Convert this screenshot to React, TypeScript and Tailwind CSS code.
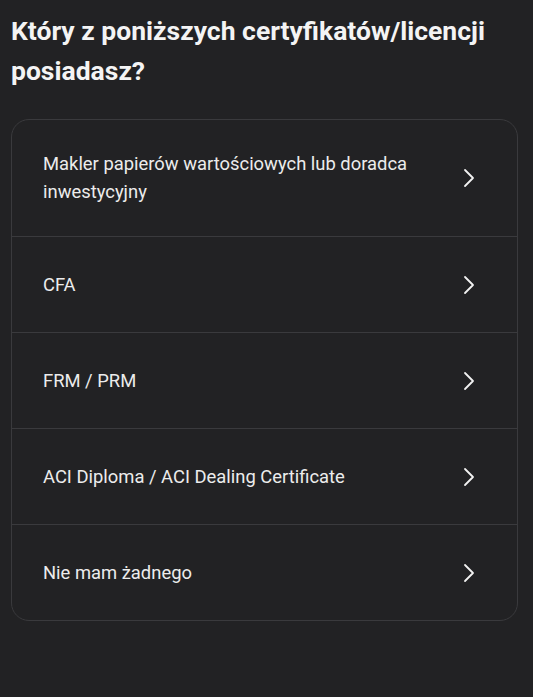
import React from 'react';

const options = [
  'Makler papierów wartościowych lub doradca inwestycyjny',
  'CFA',
  'FRM / PRM',
  'ACI Diploma / ACI Dealing Certificate',
  'Nie mam żadnego',
];

const Chevron = () => (
  <svg width="12" height="20" viewBox="0 0 12 20" fill="none" className="shrink-0">
    <path d="M2 2l8 8-8 8" stroke="#f2f2f2" strokeWidth="1.8" strokeLinecap="round" strokeLinejoin="round" />
  </svg>
);

const App: React.FC = () => {
  return (
    <div className="min-h-[697px] w-full bg-[#222224] px-[11px] pt-[11px] font-['Roboto',sans-serif]">
      <h1 className="text-[26.5px] font-bold leading-[40px] text-[#f4f4f4]">
        Który z poniższych certyfikatów/licencji posiadasz?
      </h1>

      <div className="mt-[28px] w-[507px] overflow-hidden rounded-[18px] border border-[#3a3a3d] bg-[#222224]">
        {options.map((label, i) => (
          <button
            key={label}
            className={`flex w-full items-center justify-between text-left pl-[31px] pr-[42px] py-[30px] min-h-[96px] ${
              i > 0 ? 'border-t border-[#3a3a3d]' : ''
            }`}
          >
            <span className="max-w-[385px] text-[18.4px] leading-[28px] text-[#ececec]">{label}</span>
            <Chevron />
          </button>
        ))}
      </div>
    </div>
  );
};

export default App;
